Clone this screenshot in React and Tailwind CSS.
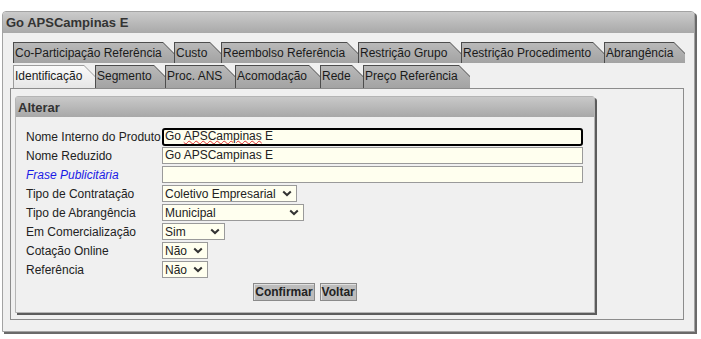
const row1 = [
  { label: 'Co-Participação Referência', w: 'w-[161px]' },
  { label: 'Custo', w: 'w-[47px]' },
  { label: 'Reembolso Referência', w: 'w-[137px]' },
  { label: 'Restrição Grupo', w: 'w-[103px]' },
  { label: 'Restrição Procedimento', w: 'w-[143px]' },
  { label: 'Abrangência', w: 'w-[81px]' },
];

const row2 = [
  { label: 'Identificação', w: 'w-[82px]', active: true },
  { label: 'Segmento', w: 'w-[70px]' },
  { label: 'Proc. ANS', w: 'w-[70px]' },
  { label: 'Acomodação', w: 'w-[85px]' },
  { label: 'Rede', w: 'w-[43px]' },
  { label: 'Preço Referência', w: 'w-[107px]' },
];

const notch = '[clip-path:polygon(0_0,calc(100%_-_11px)_0,100%_11px,100%_100%,0_100%)]';

function Tab({ label, w, active }) {
  return (
    <div
      className={`h-full shrink-0 pl-[1px] pt-[1px] ${w} ${notch} ${active ? 'bg-[#9c9c9c]' : 'bg-[#4d4d4d]'}`}
    >
      <div
        className={`h-full pl-[1px] text-[12px] leading-[21px] text-[#1a1a1a] whitespace-nowrap ${notch} ${
          active ? 'bg-gradient-to-b from-[#fafafa] to-[#e6e6e6]' : 'bg-gradient-to-b from-[#b9b9b9] to-[#a3a3a3]'
        }`}
      >
        {label}
      </div>
    </div>
  );
}

function Chevron() {
  return (
    <svg width="10" height="7" viewBox="0 0 10 7" className="shrink-0">
      <path d="M1.2 1.4 L5 5 L8.8 1.4" fill="none" stroke="#333" strokeWidth="2" />
    </svg>
  );
}

function Select({ value, w }) {
  return (
    <div
      className={`flex h-[17px] items-center justify-between border border-[#9a9a9a] bg-[#ffffef] pl-[2px] pr-[4px] text-[12px] text-[#222] ${w}`}
    >
      <span className="whitespace-nowrap">{value}</span>
      <Chevron />
    </div>
  );
}

function Field({ label, italic, children }) {
  return (
    <div className="flex h-[19px] items-start">
      <div
        className={`w-[136px] shrink-0 whitespace-nowrap text-[12px] leading-[18px] ${
          italic ? 'italic text-[#1a1ae6]' : 'text-[#222]'
        }`}
      >
        {label}
      </div>
      {children}
    </div>
  );
}

export default function App() {
  return (
    <div className="h-[339px] w-[701px] bg-white pl-[2px] pt-[11px] font-['Liberation_Sans',Arial,sans-serif]">
      <div className="flex h-[321px] w-[693px] flex-col rounded-t-[4px] border border-[#a3a3a3] bg-[#f0f0f0] shadow-[2px_2px_0_#6a6a6a]">
        <div className="h-[21px] rounded-t-[3px] bg-gradient-to-b from-[#cbcbcb] to-[#a9a9a9] pl-[3px] text-[13px] font-bold leading-[21px] text-[#333]">
          Go APSCampinas E
        </div>

        <div className="pl-[7px] pt-[9px]">
          <div className="flex h-[21px] pl-[3px]">
            {row1.map((t) => (
              <Tab key={t.label} {...t} />
            ))}
          </div>
          <div className="mt-[2px] flex h-[23px] pl-[3px]">
            {row2.map((t) => (
              <Tab key={t.label} {...t} />
            ))}
          </div>

          <div className="h-[232px] w-[674px] border border-[#8c8c8c] bg-[#f0f0f0] pl-[4px] pt-[7px]">
            <div className="h-[217px] w-[580px] rounded-t-[3px] border border-[#b5b5b5] bg-[#f0f0f0] shadow-[2px_2px_0_#5c5c5c]">
              <div className="h-[20px] bg-gradient-to-b from-[#c9c9c9] to-[#a8a8a8] pl-[2px] text-[13px] font-bold leading-[21px] text-[#333]">
                Alterar
              </div>

              <div className="pl-[10px] pt-[11px]">
                <Field label="Nome Interno do Produto">
                  <div className="h-[18px] w-[421px] overflow-hidden rounded-[3px] border-2 border-black bg-[#ffffef] pl-[1px] text-[12px] leading-[13px] text-[#222]">
                    Go{' '}
                    <span className="underline decoration-[#e03030] decoration-wavy decoration-1 underline-offset-0">
                      APSCampinas
                    </span>{' '}
                    E
                  </div>
                </Field>
                <Field label="Nome Reduzido">
                  <div className="h-[17px] w-[421px] border border-[#9a9a9a] bg-[#ffffef] pl-[2px] text-[12px] leading-[15px] text-[#222]">
                    Go APSCampinas E
                  </div>
                </Field>
                <Field label="Frase Publicitária" italic>
                  <div className="h-[17px] w-[421px] border border-[#9a9a9a] bg-[#ffffef]" />
                </Field>
                <Field label="Tipo de Contratação">
                  <Select value="Coletivo Empresarial" w="w-[135px]" />
                </Field>
                <Field label="Tipo de Abrangência">
                  <Select value="Municipal" w="w-[142px]" />
                </Field>
                <Field label="Em Comercialização">
                  <Select value="Sim" w="w-[63px]" />
                </Field>
                <Field label="Cotação Online">
                  <Select value="Não" w="w-[46px]" />
                </Field>
                <Field label="Referência">
                  <Select value="Não" w="w-[46px]" />
                </Field>

                <div className="mt-[3px] flex justify-center gap-[5px] pr-[10px]">
                  <button className="h-[18px] border border-[#8a8a8a] bg-[#bcbcbc] px-[1px] text-[12px] font-bold leading-[15px] text-[#222] shadow-[inset_1px_1px_0_#e0e0e0]">
                    Confirmar
                  </button>
                  <button className="h-[18px] border border-[#8a8a8a] bg-[#bcbcbc] px-[1px] text-[12px] font-bold leading-[15px] text-[#222] shadow-[inset_1px_1px_0_#e0e0e0]">
                    Voltar
                  </button>
                </div>
              </div>
            </div>
          </div>
        </div>
      </div>
    </div>
  );
}
